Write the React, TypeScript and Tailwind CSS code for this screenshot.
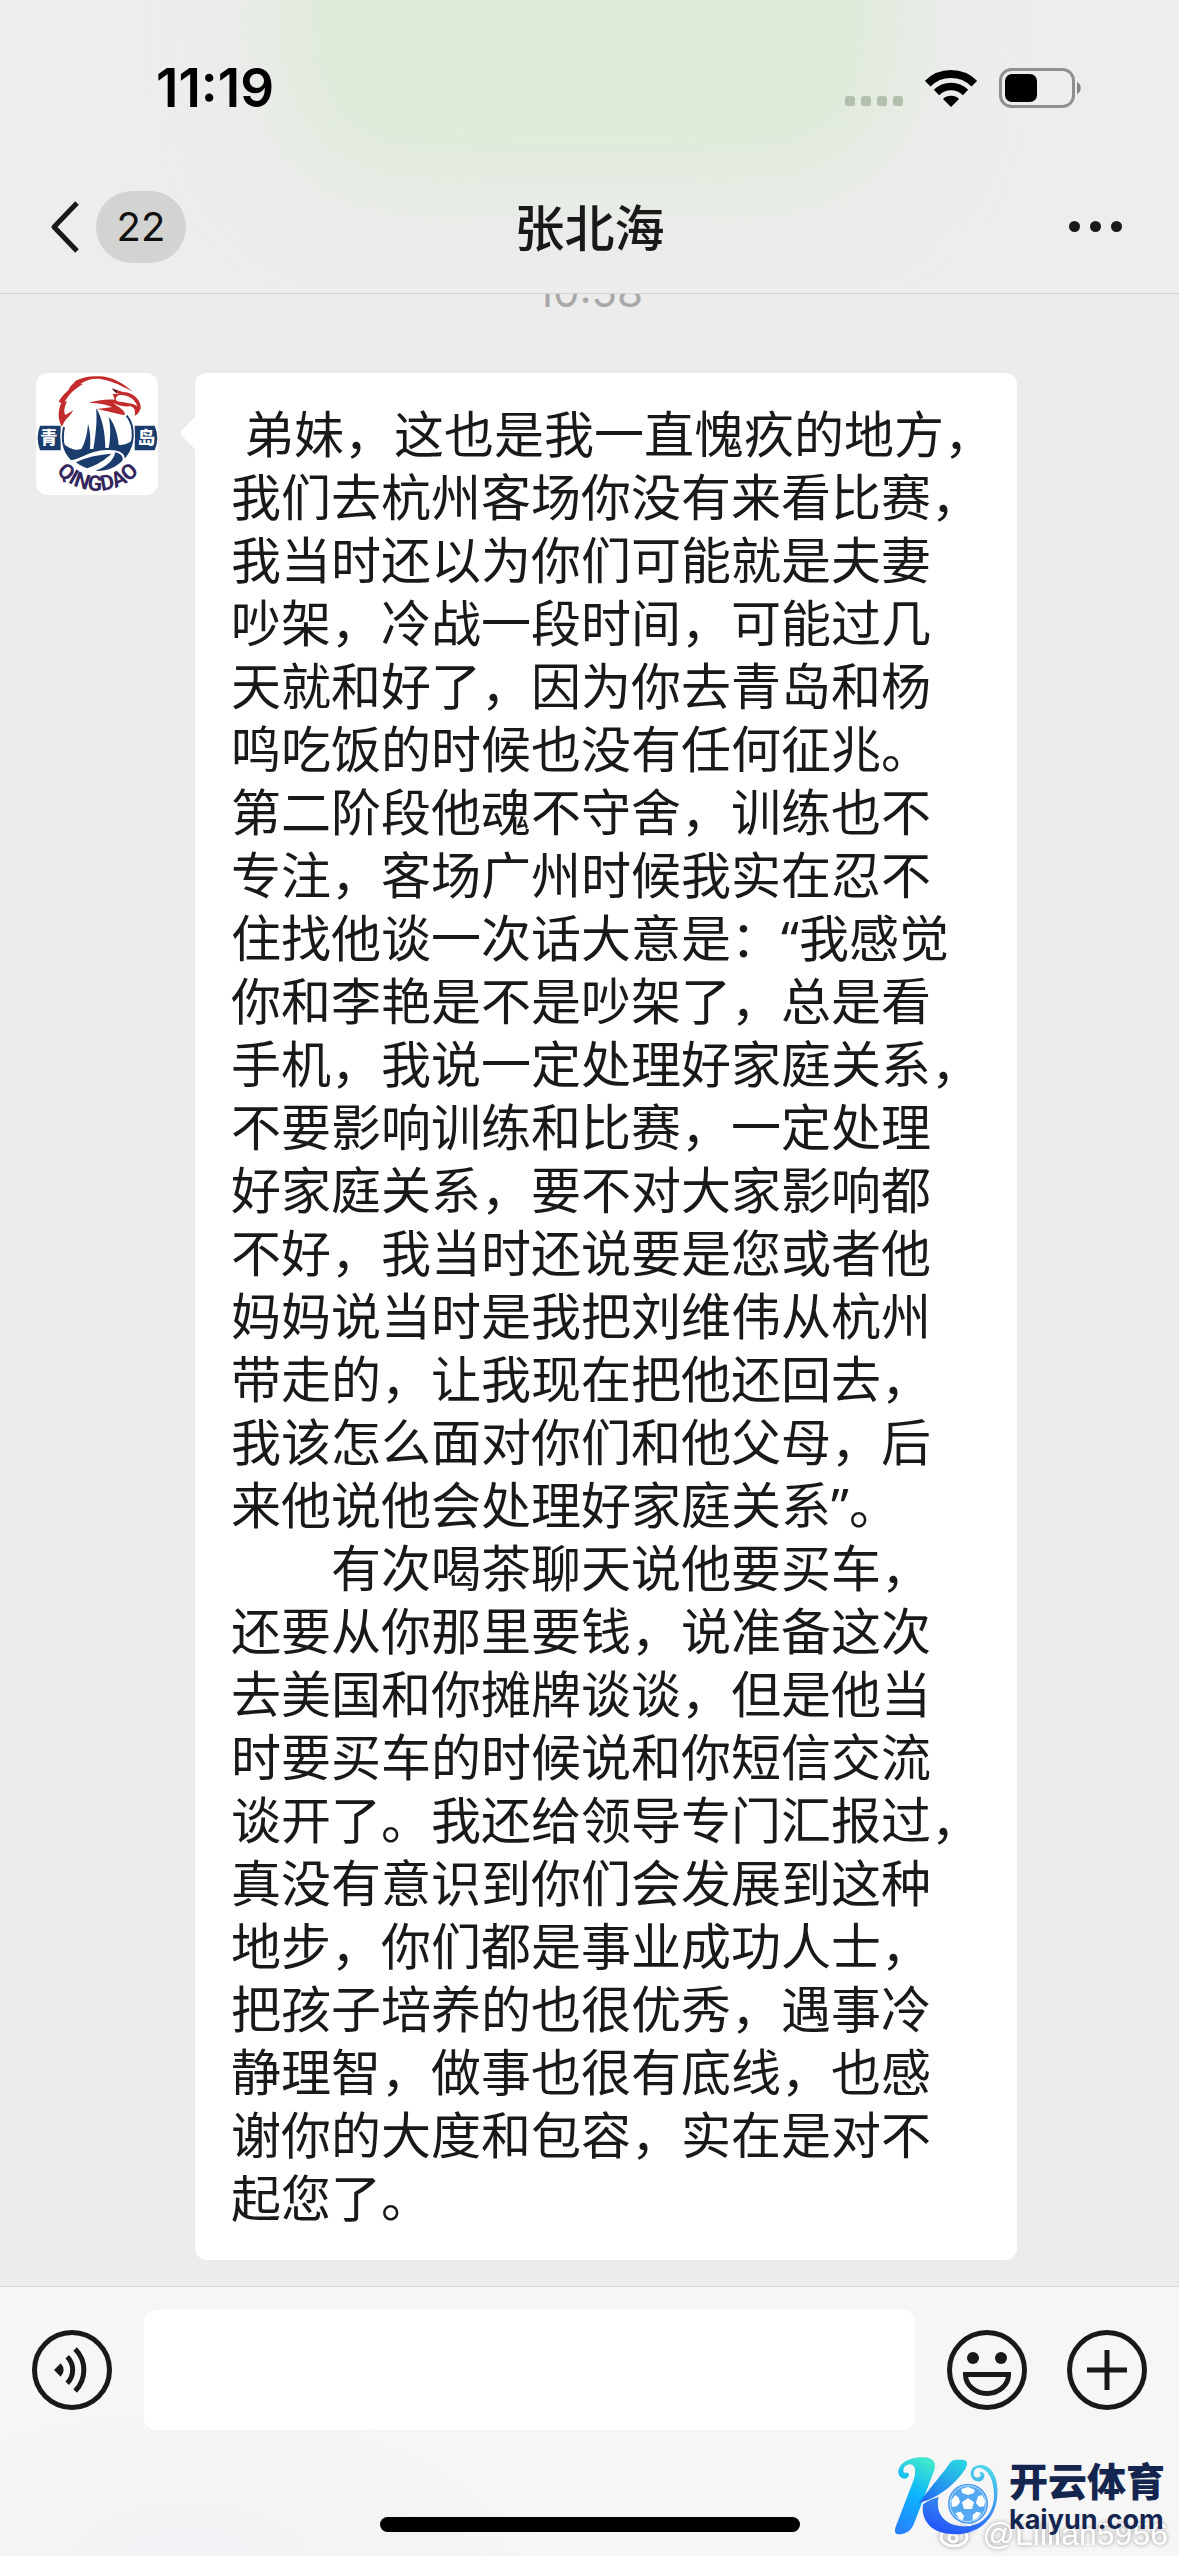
import React from 'react';

const messageLines = [
    ' 弟妹，这也是我一直愧疚的地方，',
    '我们去杭州客场你没有来看比赛，',
    '我当时还以为你们可能就是夫妻',
    '吵架，冷战一段时间，可能过几',
    '天就和好了，因为你去青岛和杨',
    '鸣吃饭的时候也没有任何征兆。',
    '第二阶段他魂不守舍，训练也不',
    '专注，客场广州时候我实在忍不',
    '住找他谈一次话大意是：“我感觉',
    '你和李艳是不是吵架了，总是看',
    '手机，我说一定处理好家庭关系，',
    '不要影响训练和比赛，一定处理',
    '好家庭关系，要不对大家影响都',
    '不好，我当时还说要是您或者他',
    '妈妈说当时是我把刘维伟从杭州',
    '带走的，让我现在把他还回去，',
    '我该怎么面对你们和他父母，后',
    '来他说他会处理好家庭关系”。',
    '\u3000\u3000有次喝茶聊天说他要买车，',
    '还要从你那里要钱，说准备这次',
    '去美国和你摊牌谈谈，但是他当',
    '时要买车的时候说和你短信交流',
    '谈开了。我还给领导专门汇报过，',
    '真没有意识到你们会发展到这种',
    '地步，你们都是事业成功人士，',
    '把孩子培养的也很优秀，遇事冷',
    '静理智，做事也很有底线，也感',
    '谢你的大度和包容，实在是对不',
    '起您了。',
];

const StatusBar: React.FC = () => (
    <div className="relative flex items-center justify-between pt-14 pb-10 pl-[156px] pr-[97px]">
        <span className="text-[53px] leading-[64px] font-semibold text-black">11:19</span>
        <div className="flex items-center">
            <div className="flex gap-[6px] pt-[26px]">
                <span className="size-[10px] rounded-[3px] bg-[#b2bfac]" />
                <span className="size-[10px] rounded-[3px] bg-[#b2bfac]" />
                <span className="size-[10px] rounded-[3px] bg-[#b2bfac]" />
                <span className="size-[10px] rounded-[3px] bg-[#b2bfac]" />
            </div>
            <svg className="ml-[22px] h-[38px] w-[52px]" viewBox="-1 -1 52 38" fill="none" stroke="#000">
                <path d="M1.7 13.7A33 33 0 0 1 48.3 13.7" strokeWidth="8" />
                <path d="M10.5 22.5A20.5 20.5 0 0 1 39.5 22.5" strokeWidth="7.5" />
                <path d="M25 37L17 29A11.3 11.3 0 0 1 33 29Z" fill="#000" stroke="none" />
            </svg>
            <svg className="ml-[21px] h-10 w-[84px]" viewBox="0 0 84 40" fill="none">
                <rect x="2.5" y="1.5" width="73" height="37" rx="11" stroke="#8d908c" strokeWidth="3" />
                <rect x="7" y="6" width="32" height="28" rx="7" fill="#000" />
                <path d="M79 14C84 16 84 24 79 26Z" fill="#858585" />
            </svg>
        </div>
    </div>
);

const NavBar: React.FC = () => (
    <div className="relative grid h-[134px] grid-cols-[1fr_auto_1fr] items-center border-b border-[#d2d2d2] px-[49px]">
        <button type="button" aria-label="返回" className="flex items-center gap-[17px]">
            <svg className="h-[52px] w-[30px]" viewBox="0 0 30 52" fill="none" stroke="#191919" strokeWidth="5">
                <path d="M28 2L5 26L28 50" strokeLinejoin="round" />
            </svg>
            <span className="flex h-[72px] w-[90px] items-center justify-center rounded-full bg-[#d3d4d2] text-[40px] text-[#111]">
                22
            </span>
        </button>
        <h1 className="pt-1 text-[50px] leading-[64px] font-medium text-[#191919]">张北海</h1>
        <button type="button" aria-label="更多" className="mr-2 flex gap-[10px] justify-self-end">
            <span className="size-[11px] rounded-full bg-[#191919]" />
            <span className="size-[11px] rounded-full bg-[#191919]" />
            <span className="size-[11px] rounded-full bg-[#191919]" />
        </button>
    </div>
);

const Avatar: React.FC = () => (
    <svg className="size-[122px] shrink-0 rounded-xl bg-white" viewBox="108 100 366 366" role="img" aria-label="头像">
        {/* Side banners */}
        <path d="M120 258H182V332H120Q106 296 120 258Z" fill="#1b3d6d" />
        <path d="M404 258H464Q480 296 464 332H404Z" fill="#1b3d6d" />
        <text x="121" y="314" fill="#fff" className="text-[52px] font-black">青</text>
        <text x="413" y="314" fill="#fff" className="text-[52px] font-black">岛</text>

        {/* Sailing badge */}
        <circle cx="293" cy="290" r="112" fill="#fff" />
        <path
            d="M192 262C184 300 190 334 214 358C240 356 262 330 318 328C352 326 372 334 376 350C402 318 408 262 380 228"
            fill="none"
            stroke="#1b3d6d"
            strokeWidth="6"
        />
        <path
            d="M192 314C220 334 232 332 244 328C256 308 262 280 264 252C272 280 272 304 270 328L280 328C288 280 292 240 288 206C306 230 316 280 316 326L326 326C332 290 332 260 326 232C344 250 354 290 356 316C370 316 386 312 398 300C394 322 386 338 376 352C366 330 342 326 318 328C272 332 246 356 214 360C200 346 192 330 192 314Z"
            fill="#1b3d6d"
        />
        <path d="M228 368C260 352 290 346 334 342C316 360 290 376 262 386C250 382 238 376 228 368Z" fill="#1b3d6d" />
        <path d="M346 338C362 342 370 350 368 362C348 384 318 396 286 394C318 382 340 364 346 338Z" fill="#1b3d6d" />

        {/* Eagle head */}
        <path
            d="M186 262C172 238 174 210 184 190L176 186C186 168 198 158 206 150C212 136 222 132 226 124C246 112 272 108 296 110C336 110 368 130 398 156C370 142 340 124 302 118C276 116 256 122 240 134L250 132C224 148 204 164 194 188L202 184C190 206 192 218 196 226L220 212C208 234 192 240 186 262Z"
            fill="#c32b2c"
        />
        <path
            d="M334 146C350 150 362 158 380 158C404 164 424 184 422 206C418 218 412 226 404 228C408 212 402 202 390 200C372 202 352 196 340 190C360 206 378 214 374 226C352 224 324 214 290 208C308 206 326 204 336 202C320 196 302 190 266 190C288 182 318 178 344 180L338 162L356 164Z"
            fill="#c32b2c"
        />
        <path d="M358 166C382 164 406 178 412 200C396 188 372 190 350 184Q342 174 358 166Z" fill="#fff" />
        <path d="M336 148L352 152L350 162Z" fill="#4a1a24" />

        {/* City name along the lower edge */}
        <path id="avatar-arc" d="M148 370A168 168 0 0 0 438 370" fill="none" />
        <text fill="#33265c" className="font-['Roboto',sans-serif] text-[64px] font-bold">
            <textPath href="#avatar-arc" startOffset="50%" textAnchor="middle">
                QINGDAO
            </textPath>
        </text>
    </svg>
);

const Message: React.FC = () => (
    <div className="flex items-start pl-9">
        <Avatar />
        <svg className="mt-[44px] ml-[22px] h-8 w-[15px] shrink-0" viewBox="0 0 15 32" fill="#fff">
            <path d="M15 0L2 13Q0 16 2 19L15 32Z" />
        </svg>
        <div className="w-[822px] rounded-xl bg-white py-[30px] pl-9 font-['Noto_Sans','Noto_Sans_CJK_SC',sans-serif] text-[50px] leading-[63px] text-[#191919]">
            {messageLines.map((line, index) => (
                <p key={index} className="whitespace-pre">
                    {line}
                </p>
            ))}
        </div>
    </div>
);

const Watermark: React.FC = () => (
    <div className="absolute right-[11px] bottom-1 h-24 w-[274px]">
        <div className="absolute right-0 bottom-0 flex items-center gap-2 [filter:drop-shadow(0_0_2px_#00000066)]">
            <svg className="h-7 w-9" viewBox="0 0 36 28" fill="none" stroke="#fff" strokeWidth="3">
                <ellipse cx="15" cy="17" rx="13" ry="9" />
                <circle cx="14" cy="18" r="4" />
                <path d="M24 3Q33 3 33 12" />
            </svg>
            <span className="font-['Liberation_Sans',sans-serif] text-[32px] leading-9 text-white">@Lillian5956</span>
        </div>
        <div className="absolute top-0 left-0 flex gap-[10px]">
            <svg className="h-20 w-[105px]" viewBox="338 557 315 240">
                <defs>
                    <linearGradient id="stem" x1="0.6" y1="0" x2="0.3" y2="1">
                        <stop offset="0" stopColor="#3ee6cf" />
                        <stop offset="0.45" stopColor="#0bb6fb" />
                        <stop offset="1" stopColor="#2683ff" />
                    </linearGradient>
                    <linearGradient id="arm" x1="0.8" y1="0" x2="0.1" y2="1">
                        <stop offset="0" stopColor="#2ad4e4" />
                        <stop offset="1" stopColor="#2164f5" />
                    </linearGradient>
                    <linearGradient id="leg" x1="0.8" y1="0" x2="0.4" y2="1">
                        <stop offset="0" stopColor="#4ed8ea" />
                        <stop offset="0.5" stopColor="#3d95ee" />
                        <stop offset="1" stopColor="#2457fa" />
                    </linearGradient>
                </defs>
                <path
                    d="M376 624C358 630 344 608 354 592C370 566 400 560 430 561C458 563 466 580 458 602L400 755C392 780 375 793 348 792C338 790 340 775 346 762L398 626C406 600 400 582 386 582C370 582 360 600 370 608C380 602 390 614 376 624Z"
                    fill="url(#stem)"
                />
                <path
                    d="M508 575C515 567 530 568 545 568C560 570 560 582 552 596C520 644 480 672 438 690Q424 694 412 700C440 660 490 602 508 575Z"
                    fill="url(#arm)"
                />
                <path
                    d="M425 702C440 690 455 684 472 680C462 724 484 762 540 768C600 772 640 730 638 670C636 612 610 592 590 592C574 596 572 620 588 622C600 620 600 612 594 606C606 600 616 616 604 628C590 642 566 628 568 606C572 588 590 582 606 585C640 592 652 640 648 680C640 750 590 792 520 792C450 792 418 750 425 702Z"
                    fill="url(#leg)"
                />
                <circle cx="560" cy="700" r="60" fill="#4a9df0" />
                <circle cx="560" cy="700" r="54" fill="#55a8f2" stroke="#fff" strokeWidth="2" />
                <g fill="#fff">
                    <path d="M540 656L560 650L580 658L578 668L560 674L542 668Z" />
                    <path d="M510 690L522 674L532 682L536 696L526 708L512 710Z" />
                    <path d="M590 678L602 674L612 692L608 708L594 710L584 698Z" />
                    <path d="M560 684L578 696L572 716H548L542 696Z" />
                    <path d="M522 728L538 724L548 736L544 750L534 746Z" />
                    <path d="M574 734L586 724L600 728L588 744L574 750Z" />
                </g>
            </svg>
            <div className="flex flex-col pt-1 text-[#14264f]">
                <span className="text-[39px] leading-[44px] font-black">开云体育</span>
                <span className="text-[27px] leading-8 font-bold">kaiyun.com</span>
            </div>
        </div>
    </div>
);

const InputBar: React.FC = () => (
    <footer className="relative border-t border-[#d9d9d9] bg-[#f6f6f6] bg-[radial-gradient(ellipse_30%_60%_at_16%_100%,#f1f2f5,transparent)] pt-[23px] pb-6">
        <div className="flex items-center gap-8 px-8">
            <button type="button" aria-label="语音">
                <svg className="size-20" viewBox="0 0 80 80" fill="none" stroke="#191919" strokeWidth="5">
                    <circle cx="40" cy="40" r="37.5" />
                    <path d="M22 40L28.7 33.3Q34.5 40 28.7 46.7Z" fill="#191919" stroke="none" />
                    <path d="M35.2 26.8A18.7 18.7 0 0 1 35.2 53.2" />
                    <path d="M43.1 18.9A29.8 29.8 0 0 1 43.1 61.1" />
                </svg>
            </button>
            <input
                type="text"
                aria-label="输入消息"
                className="h-[120px] min-w-0 flex-1 rounded-xl bg-white px-6 text-[50px] outline-none"
            />
            <div className="flex gap-10">
                <button type="button" aria-label="表情">
                    <svg className="size-20" viewBox="0 0 80 80" fill="none" stroke="#191919" strokeWidth="5">
                        <circle cx="40" cy="40" r="37.5" />
                        <circle cx="26" cy="28" r="6" fill="#191919" stroke="none" />
                        <circle cx="54" cy="28" r="6" fill="#191919" stroke="none" />
                        <path d="M18.5 44.5H61.5A21.5 19 0 0 1 18.5 44.5Z" />
                    </svg>
                </button>
                <button type="button" aria-label="添加">
                    <svg className="size-20" viewBox="0 0 80 80" fill="none" stroke="#191919" strokeWidth="5">
                        <circle cx="40" cy="40" r="37.5" />
                        <path d="M40 20V60M20 40H60" />
                    </svg>
                </button>
            </div>
        </div>
        <div className="mx-auto mt-[87px] h-[15px] w-[420px] rounded-full bg-black" />
        <Watermark />
    </footer>
);

const App: React.FC = () => {
    return (
        <div className="flex h-screen flex-col overflow-hidden bg-[#ececec] font-['Inter','Noto_Sans_CJK_SC',sans-serif]">
            <header className="relative overflow-hidden bg-[#ededed]">
                {/* Chat content glowing through the frosted bar */}
                <div className="absolute inset-x-[24%] -top-48 h-[370px] rounded-[100px] bg-[#dcead6] blur-[56px]" />
                <StatusBar />
                <NavBar />
            </header>

            {/* Scrolled to the newest message */}
            <main className="flex min-h-0 flex-1 flex-col justify-end overflow-hidden pb-[26px]">
                <time className="mb-[57px] text-center text-[42px] leading-[48px] text-[#a8a8a8]">10:58</time>
                <Message />
            </main>

            <InputBar />
        </div>
    );
};

export default App;
